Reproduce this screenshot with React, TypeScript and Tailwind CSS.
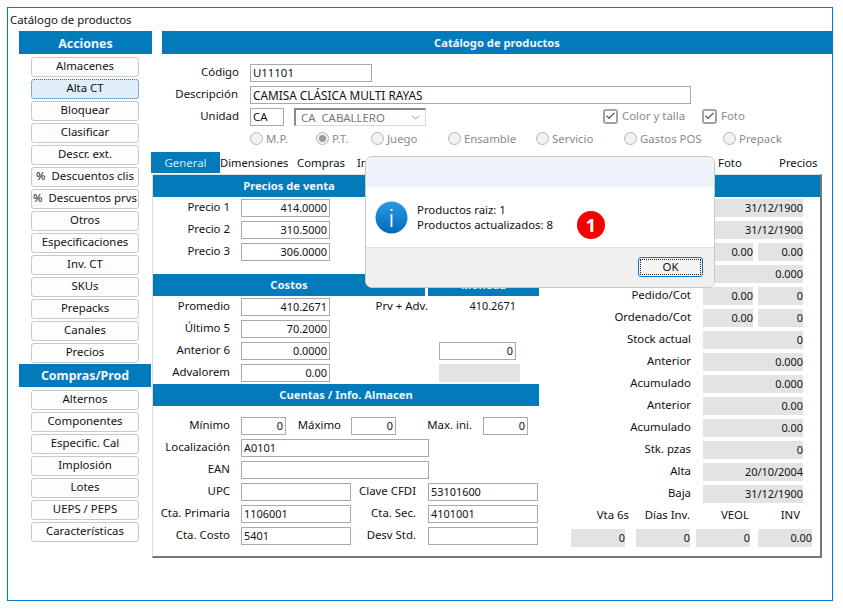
import React from 'react';
import { ChevronDown, Check } from 'lucide-react';

const acciones = ['Almacenes', 'Alta CT', 'Bloquear', 'Clasificar', 'Descr. ext.', '%  Descuentos clis', '%  Descuentos prvs', 'Otros', 'Especificaciones', 'Inv. CT', 'SKUs', 'Prepacks', 'Canales', 'Precios'];
const compras = ['Alternos', 'Componentes', 'Especific. Cal', 'Implosión', 'Lotes', 'UEPS / PEPS', 'Características'];
const tipos = [
  { label: 'M.P.', w: 'w-[66px]' },
  { label: 'P.T.', w: 'w-[55px]', on: true },
  { label: 'Juego', w: 'w-[77px]' },
  { label: 'Ensamble', w: 'w-[88px]' },
  { label: 'Servicio', w: 'w-[88px]' },
  { label: 'Gastos POS', w: 'w-[99px]' },
  { label: 'Prepack', w: 'w-[70px]' },
];
const existencias = [
  { label: '', v: '31/12/1900' },
  { label: '', v: '31/12/1900' },
  { label: '', v: '0.00', v2: '0.00' },
  { label: '', v: '0.000' },
  { label: 'Pedido/Cot', v: '0.00', v2: '0' },
  { label: 'Ordenado/Cot', v: '0.00', v2: '0' },
  { label: 'Stock actual', v: '0' },
  { label: 'Anterior', v: '0.000' },
  { label: 'Acumulado', v: '0.000' },
  { label: 'Anterior', v: '0.00' },
  { label: 'Acumulado', v: '0.00' },
  { label: 'Stk. pzas', v: '0' },
  { label: 'Alta', v: '20/10/2004' },
  { label: 'Baja', v: '31/12/1900' },
];

function Input({ value, className, right }: { value?: string; className: string; right?: boolean }) {
  return (
    <div className={`h-[18px] shrink-0 border border-[#a9a9a9] bg-white px-[2px] leading-[16px] whitespace-nowrap ${right ? 'text-right text-[10.9px]' : ''} ${className}`}>
      {value}
    </div>
  );
}

function Gray({ value, className }: { value: string; className: string }) {
  return <div className={`h-[18px] shrink-0 bg-[#e3e3e3] text-right text-[10.9px] leading-[18px] ${className}`}>{value}</div>;
}

function Label({ children, className }: { children: React.ReactNode; className: string }) {
  return <div className={`mb-[2px] shrink-0 text-right leading-[16px] whitespace-nowrap ${className}`}>{children}</div>;
}

function Row({ label, children }: { label: string; children: React.ReactNode }) {
  return (
    <div className="flex h-[18px] items-center">
      <Label className="mr-[11px] w-[77px]">{label}</Label>
      {children}
    </div>
  );
}

function Header({ children, className }: { children?: React.ReactNode; className: string }) {
  return <div className={`h-[22px] shrink-0 bg-[#037bbb] text-center text-[11.2px] font-bold leading-[22px] text-[#eef6fb] ${className}`}>{children}</div>;
}

function Side({ label, active }: { label: string; active?: boolean }) {
  return (
    <button className={`h-[20px] w-[108px] whitespace-pre rounded-[3px] border pb-[3px] text-center leading-[15px] ${active ? 'border-dotted border-[#1c6fb5] bg-[#e0eef9]' : 'border-[#c9c9c9] bg-[#fdfdfd]'}`}>
      {label}
    </button>
  );
}

function Check2({ label, className }: { label: string; className: string }) {
  return (
    <div className={`mb-[2px] flex items-center gap-[4px] text-[#8a8a8a] ${className}`}>
      <span className="flex h-[15px] w-[15px] items-center justify-center rounded-[3px] border-2 border-[#a3a3a3] bg-white">
        <Check size={12} strokeWidth={2.6} className="text-[#5c5c5c]" />
      </span>
      {label}
    </div>
  );
}

export default function App() {
  return (
    <div className="relative h-[610px] w-[843px] overflow-hidden bg-white text-[11.4px] text-[#111111] [font-family:'Noto_Sans',sans-serif]">
      <div className="ml-[7px] mt-[7px] h-[594px] w-[826px] border border-[#0078d4]">
        <div className="h-[23px] pl-[2px] leading-[24px]">Catálogo de productos</div>
        <div className="flex">
          <aside className="ml-[11px] w-[132px] shrink-0">
            <div className="h-[23px] w-[133px] bg-[#037bbb] text-center text-[12.4px] font-bold leading-[25px] text-[#eef6fb]">Acciones</div>
            <div className="mt-[3px] flex flex-col gap-[2px] pl-[12px]">
              {acciones.map(a => <Side key={a} label={a} active={a === 'Alta CT'} />)}
            </div>
            <div className="mt-[1px] h-[23px] bg-[#037bbb] text-center text-[12.4px] font-bold leading-[23px] text-[#eef6fb]">Compras/Prod</div>
            <div className="mt-[3px] flex flex-col gap-[2px] pl-[12px]">
              {compras.map(a => <Side key={a} label={a} />)}
            </div>
          </aside>

          <main className="w-[681px] shrink-0">
            <div className="ml-[11px] h-[23px] bg-[#037bbb] text-center text-[11.2px] font-bold leading-[24px] text-[#eef6fb]">Catálogo de productos</div>

            <div className="mt-[10px] flex flex-col gap-[4px]">
              <div className="flex h-[18px] items-center">
                <Label className="mr-[11px] w-[88px]">Código</Label>
                <Input value="U11101" className="w-[122px]" />
              </div>
              <div className="flex h-[18px] items-center">
                <Label className="mr-[12px] w-[87px]">Descripción</Label>
                <Input value="CAMISA CLÁSICA MULTI RAYAS" className="w-[441px] text-[11.8px]" />
              </div>
              <div className="flex h-[18px] items-center">
                <Label className="mr-[11px] w-[88px]">Unidad</Label>
                <Input value="CA" className="w-[34px]" />
                <div className="ml-[10px] flex h-[18px] w-[132px] items-center border border-b-[#d9d9d9] border-l-2 border-r-[#d9d9d9] border-t-2 border-l-[#8a8a8a] border-t-[#8a8a8a] pl-[5px] text-[#777777]">
                  <span className="flex-1 whitespace-pre">CA  CABALLERO</span>
                  <ChevronDown size={13} strokeWidth={1.3} className="mr-[3px] text-[#666666]" />
                </div>
                <Check2 label="Color y talla" className="ml-[177px] w-[99px]" />
                <Check2 label="Foto" className="" />
              </div>
            </div>

            <div className="ml-[99px] mt-[4px] flex h-[18px] items-center text-[#8a8a8a]">
              {tipos.map(t => (
                <div key={t.label} className={`flex items-center gap-[3px] ${t.w}`}>
                  <span className="flex h-[13px] w-[13px] items-center justify-center rounded-full border border-[#b5b5b5] bg-[#f2f2f2]">
                    {t.on && <span className="h-[7px] w-[7px] rounded-full bg-[#9a9a9a]" />}
                  </span>
                  {t.label}
                </div>
              ))}
            </div>

            <div className="mt-[4px] flex h-[21px] items-center leading-[22px]">
              <div className="h-[21px] w-[69px] bg-[#037bbb] text-center text-[#d4e8f4]">General</div>
              <div className="w-[77px] text-[11.2px]">Dimensiones</div>
              <div className="w-[60px]">Compras</div>
              <div className="w-[361px]">Inventario</div>
              <div className="w-[61px]">Foto</div>
              <div>Precios</div>
            </div>

            <section className="ml-[1px] mt-[1px] flex h-[384px] w-[670px] border-b-2 border-l border-r-2 border-t border-b-[#777777] border-l-[#dddddd] border-r-[#777777] border-t-[#dddddd] bg-white">
              <div className="w-[386px] shrink-0">
                <div className="flex">
                  <Header className="w-[272px]">Precios de venta</Header>
                  <Header className="ml-[3px] w-[111px]" />
                </div>
                <div className="mt-[2px] flex flex-col gap-[4px]">
                  <Row label="Precio 1"><Input right value="414.0000" className="w-[89px]" /></Row>
                  <Row label="Precio 2"><Input right value="310.5000" className="w-[89px]" /></Row>
                  <Row label="Precio 3"><Input right value="306.0000" className="w-[89px]" /></Row>
                </div>

                <div className="mt-[13px] flex">
                  <Header className="w-[272px]">Costos</Header>
                  <Header className="ml-[3px] w-[111px]">Moneda</Header>
                </div>
                <div className="mt-[2px] flex flex-col gap-[4px]">
                  <Row label="Promedio">
                    <Input right value="410.2671" className="w-[89px]" />
                    <Label className="ml-[43px] w-[55px]">Prv + Adv.</Label>
                    <div className="ml-[11px] w-[77px] pb-[1px] text-right text-[10.9px]">410.2671</div>
                  </Row>
                  <Row label="Último 5"><Input right value="70.2000" className="w-[89px]" /></Row>
                  <Row label="Anterior 6">
                    <Input right value="0.0000" className="w-[89px]" />
                    <Input right value="0" className="ml-[109px] w-[77px]" />
                  </Row>
                  <Row label="Advalorem">
                    <Input right value="0.00" className="w-[89px]" />
                    <div className="ml-[109px] h-[18px] w-[81px] bg-[#e3e3e3]" />
                  </Row>
                </div>

                <Header className="mt-[2px]">Cuentas / Info. Almacen</Header>
                <div className="mt-[11px] flex flex-col gap-[4px]">
                  <Row label="Mínimo">
                    <Input right value="0" className="w-[45px]" />
                    <Label className="w-[55px]">Máximo</Label>
                    <Input right value="0" className="ml-[10px] w-[45px]" />
                    <Label className="w-[76px]">Max. ini.</Label>
                    <Input right value="0" className="ml-[11px] w-[45px]" />
                  </Row>
                  <Row label="Localización"><Input value="A0101" className="w-[188px] text-[10.9px]" /></Row>
                  <Row label="EAN"><Input className="w-[188px]" /></Row>
                  <Row label="UPC">
                    <Input className="w-[110px]" />
                    <Label className="w-[65px]">Clave CFDI</Label>
                    <Input value="53101600" className="ml-[12px] w-[110px] text-[10.9px]" />
                  </Row>
                  <Row label="Cta. Primaria">
                    <Input value="1106001" className="w-[110px] text-[10.9px]" />
                    <Label className="w-[65px]">Cta. Sec.</Label>
                    <Input value="4101001" className="ml-[12px] w-[110px] text-[10.9px]" />
                  </Row>
                  <Row label="Cta. Costo">
                    <Input value="5401" className="w-[110px] text-[10.9px]" />
                    <Label className="w-[65px]">Desv Std.</Label>
                    <Input className="ml-[12px] w-[110px]" />
                  </Row>
                </div>
              </div>

              <div className="flex-1">
                <Header className="ml-[4px]">Existencias</Header>
                <div className="mt-[2px] flex flex-col gap-[4px]">
                  {existencias.map((e, i) => (
                    <div key={i} className="flex h-[18px] items-center">
                      <Label className="mr-[12px] w-[152px]">{e.label}</Label>
                      {e.v2 ? (
                        <>
                          <Gray value={e.v} className="w-[50px]" />
                          <Gray value={e.v2} className="ml-[5px] w-[45px]" />
                        </>
                      ) : (
                        <Gray value={e.v} className="w-[100px]" />
                      )}
                    </div>
                  ))}
                </div>
                <div className="mt-[4px] flex h-[18px] items-center">
                  <Label className="w-[90px]">Vta 6s</Label>
                  <Label className="w-[61px]">Días Inv.</Label>
                  <Label className="w-[59px]">VEOL</Label>
                  <Label className="w-[51px]">INV</Label>
                </div>
                <div className="mt-[4px] flex pl-[32px]">
                  <Gray value="0" className="w-[54px]" />
                  <Gray value="0" className="ml-[11px] w-[54px]" />
                  <Gray value="0" className="ml-[6px] w-[54px]" />
                  <Gray value="0.00" className="ml-[8px] w-[54px]" />
                </div>
              </div>
            </section>
          </main>
        </div>
      </div>

      {/* mensaje */}
      <div className="absolute left-[365px] top-[156px] flex h-[132px] w-[350px] flex-col overflow-hidden rounded-[7px] border border-[#c8c8c8] bg-white">
        <div className="h-[30px] shrink-0 bg-[#eef2fb]" />
        <div className="flex h-[60px] shrink-0 items-center pl-[9px]">
          <svg width="33" height="33" viewBox="0 0 33 33" className="shrink-0">
            <defs>
              <linearGradient id="infoBlue" x1="0" y1="0" x2="0" y2="1">
                <stop offset="0" stopColor="#2a9be0" />
                <stop offset="1" stopColor="#0468bd" />
              </linearGradient>
            </defs>
            <circle cx="16.5" cy="16.5" r="16" fill="url(#infoBlue)" />
            <rect x="15.6" y="13" width="1.8" height="13" fill="#ffffff" />
            <rect x="15.6" y="8" width="1.8" height="2" fill="#ffffff" />
          </svg>
          <div className="ml-[9px] w-[160px] leading-[15px]">
            <div>Productos raiz: 1</div>
            <div>Productos actualizados: 8</div>
          </div>
          <div className="mt-[16px] flex h-[28px] w-[28px] shrink-0 items-center justify-center rounded-full bg-[#f50000] text-[18px] font-bold leading-none text-white">1</div>
        </div>
        <div className="flex flex-1 items-start justify-end border-t border-[#dfdfdf] bg-[#f0f0f0] pr-[11px] pt-[9px]">
          <button className="h-[20px] w-[65px] rounded-[3px] border border-[#0078d4] bg-[#f5f5f5] p-[1px] leading-none">
            <span className="flex h-full items-center justify-center border border-dotted border-[#222222]">OK</span>
          </button>
        </div>
      </div>
    </div>
  );
}
